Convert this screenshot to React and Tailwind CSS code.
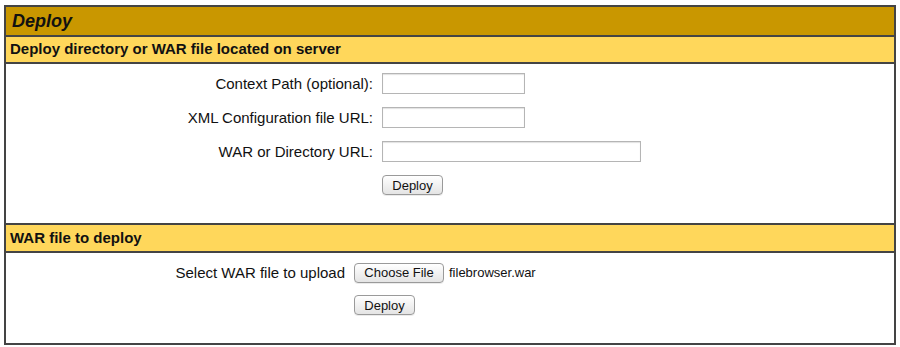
import React from "react";

function MacButton({ children, className = "" }) {
  return (
    <button
      type="button"
      className={`h-[20px] rounded-[4px] border border-[#9a9a9a] bg-gradient-to-b from-white to-[#e4e4e4] text-[13px] leading-none text-[#111] shadow-[0_1px_0_rgba(0,0,0,0.08)] ${className}`}
    >
      {children}
    </button>
  );
}

function TextField({ width }) {
  return (
    <input
      type="text"
      className={`h-[21px] border border-[#b5b5b5] bg-white shadow-[inset_0_1px_1px_rgba(0,0,0,0.12)] outline-none ${width}`}
    />
  );
}

export default function App() {
  return (
    <div className="h-[347px] w-[900px] bg-white pl-[4px] pt-[5px] font-['Liberation_Sans',Arial,sans-serif] text-[#111]">
      <div className="flex h-[340px] w-[892px] flex-col border-2 border-[#444]">
        <div className="flex h-[30px] items-center border-b-2 border-[#444] bg-[#c99700] pl-[6px] text-[18px] font-bold italic">
          Deploy
        </div>
        <div className="flex h-[27px] items-center border-b-2 border-[#444] bg-[#ffd75b] pl-[4px] text-[15px] font-bold">
          Deploy directory or WAR file located on server
        </div>

        <div className="h-[161px] border-b-2 border-[#444] pt-[9px]">
          <div className="grid grid-cols-[367px_1fr] items-center gap-x-[9px] gap-y-[13px] text-[15px] leading-[21px]">
            <div className="text-right">Context Path (optional):</div>
            <div className="flex"><TextField width="w-[143px]" /></div>
            <div className="text-right">XML Configuration file URL:</div>
            <div className="flex"><TextField width="w-[143px]" /></div>
            <div className="text-right">WAR or Directory URL:</div>
            <div className="flex"><TextField width="w-[259px]" /></div>
            <div />
            <div className="flex"><MacButton className="w-[61px]">Deploy</MacButton></div>
          </div>
        </div>

        <div className="flex h-[28px] items-center border-b-2 border-[#444] bg-[#ffd75b] pl-[4px] text-[15px] font-bold">
          WAR file to deploy
        </div>

        <div className="flex-1 pt-[9px]">
          <div className="grid grid-cols-[339px_1fr] items-center gap-x-[9px] gap-y-[12px] leading-[21px]">
            <div className="text-right text-[15px]">Select WAR file to upload</div>
            <div className="flex items-center gap-[5px]">
              <MacButton className="w-[90px]">Choose File</MacButton>
              <span className="text-[13px]">filebrowser.war</span>
            </div>
            <div />
            <div className="flex"><MacButton className="w-[61px]">Deploy</MacButton></div>
          </div>
        </div>
      </div>
    </div>
  );
}
